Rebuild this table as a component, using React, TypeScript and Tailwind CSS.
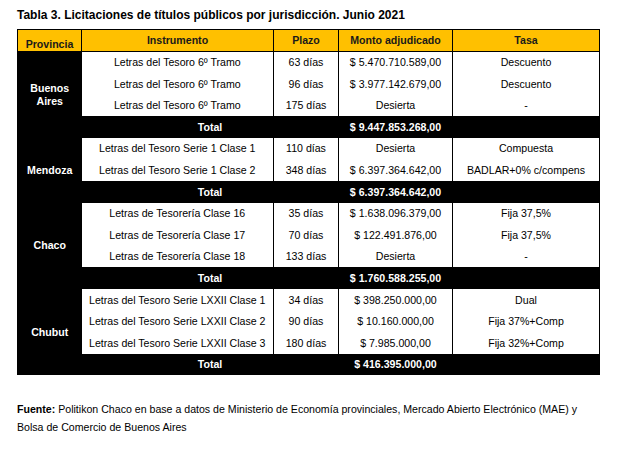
import React from "react";

interface Row {
  instrumento: string;
  plazo: string;
  monto: string;
  tasa: string;
}

interface Group {
  provincia: string[];
  rows: Row[];
  total: string;
}

const groups: Group[] = [
  {
    provincia: ["Buenos", "Aires"],
    rows: [
      { instrumento: "Letras del Tesoro 6º Tramo", plazo: "63 días", monto: "$ 5.470.710.589,00", tasa: "Descuento" },
      { instrumento: "Letras del Tesoro 6º Tramo", plazo: "96 días", monto: "$ 3.977.142.679,00", tasa: "Descuento" },
      { instrumento: "Letras del Tesoro 6º Tramo", plazo: "175 días", monto: "Desierta", tasa: "-" },
    ],
    total: "$ 9.447.853.268,00",
  },
  {
    provincia: ["Mendoza"],
    rows: [
      { instrumento: "Letras del Tesoro Serie 1 Clase 1", plazo: "110 días", monto: "Desierta", tasa: "Compuesta" },
      { instrumento: "Letras del Tesoro Serie 1 Clase 2", plazo: "348 días", monto: "$ 6.397.364.642,00", tasa: "BADLAR+0% c/compens" },
    ],
    total: "$ 6.397.364.642,00",
  },
  {
    provincia: ["Chaco"],
    rows: [
      { instrumento: "Letras de Tesorería Clase 16", plazo: "35 días", monto: "$ 1.638.096.379,00", tasa: "Fija 37,5%" },
      { instrumento: "Letras de Tesorería Clase 17", plazo: "70 días", monto: "$ 122.491.876,00", tasa: "Fija 37,5%" },
      { instrumento: "Letras de Tesorería Clase 18", plazo: "133 días", monto: "Desierta", tasa: "-" },
    ],
    total: "$ 1.760.588.255,00",
  },
  {
    provincia: ["Chubut"],
    rows: [
      { instrumento: "Letras del Tesoro Serie LXXII Clase 1", plazo: "34 días", monto: "$ 398.250.000,00", tasa: "Dual" },
      { instrumento: "Letras del Tesoro Serie LXXII Clase 2", plazo: "90 días", monto: "$ 10.160.000,00", tasa: "Fija 37%+Comp" },
      { instrumento: "Letras del Tesoro Serie LXXII Clase 3", plazo: "180 días", monto: "$ 7.985.000,00", tasa: "Fija 32%+Comp" },
    ],
    total: "$ 416.395.000,00",
  },
];

const cell = "border-r border-black bg-white text-center align-middle p-0";

export default function App() {
  return (
    <div className="w-[620px] h-[456px] bg-white px-[17px] text-black font-['Liberation_Sans',Arial,sans-serif]">
      <h1 className="pt-[7px] h-[29px] text-[12px] font-bold leading-[17px]">
        Tabla 3. Licitaciones de títulos públicos por jurisdicción. Junio 2021
      </h1>

      <table className="table-fixed border-collapse w-[582px] text-[10.6px] leading-none">
        <colgroup>
          <col className="w-[64px]" />
          <col className="w-[192px]" />
          <col className="w-[65px]" />
          <col className="w-[114px]" />
          <col className="w-[147px]" />
        </colgroup>
        <thead>
          <tr className="h-[22px] bg-[#ffc000] font-bold text-[#1a1a1a]">
            <th className="border border-black align-bottom pb-[1px] p-0">Provincia</th>
            <th className="border border-black align-top pt-[5px] p-0">Instrumento</th>
            <th className="border border-black align-top pt-[5px] p-0">Plazo</th>
            <th className="border border-black align-top pt-[5px] p-0">Monto adjudicado</th>
            <th className="border border-black align-top pt-[5px] p-0">Tasa</th>
          </tr>
        </thead>
        <tbody>
          {groups.map((g) => (
            <React.Fragment key={g.provincia.join(" ")}>
              {g.rows.map((r, i) => (
                <tr key={i} className="h-[21.6px]">
                  {i === 0 && (
                    <td
                      rowSpan={g.rows.length + 1}
                      className="bg-black text-white font-bold text-center align-middle p-0 border-l border-black leading-[13px]"
                    >
                      {g.provincia.map((p) => (
                        <div key={p}>{p}</div>
                      ))}
                    </td>
                  )}
                  <td className={cell}>{r.instrumento}</td>
                  <td className={cell}>{r.plazo}</td>
                  <td className={cell}>{r.monto}</td>
                  <td className={cell}>{r.tasa}</td>
                </tr>
              ))}
              <tr className="h-[21.6px] bg-black text-white font-bold">
                <td colSpan={2} className="text-center align-middle p-0">
                  Total
                </td>
                <td className="text-center align-middle p-0">{g.total}</td>
                <td className="p-0 border-r border-black"></td>
              </tr>
            </React.Fragment>
          ))}
        </tbody>
      </table>

      <p className="mt-[25px] text-[10.6px] leading-[18px]">
        <span className="font-bold">Fuente:</span> Politikon Chaco en base a datos de Ministerio de
        Economía provinciales, Mercado Abierto Electrónico (MAE) y
        <br />
        Bolsa de Comercio de Buenos Aires
      </p>
    </div>
  );
}
